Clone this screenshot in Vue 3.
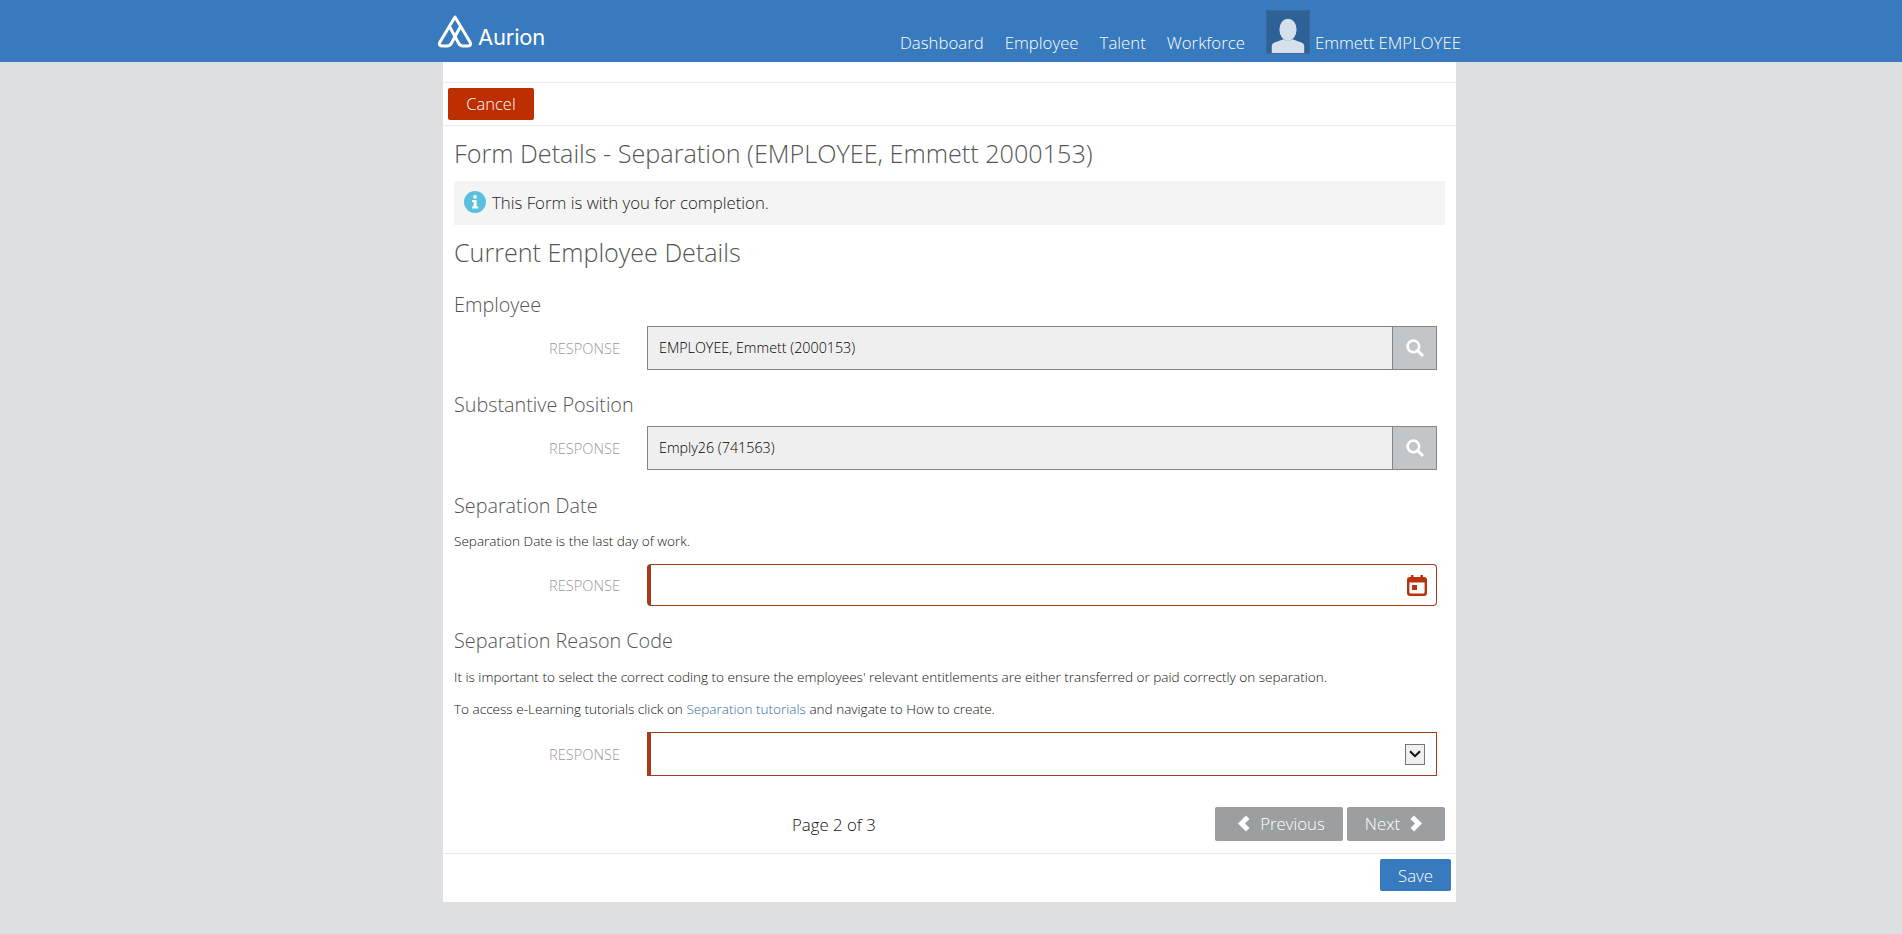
<template>
  <div class="page">
    <header class="topbar">
      <div class="topbar-inner">
        <a class="brand">
          <svg class="brand-mark" viewBox="0 0 34 33" fill="none" stroke="#fff" stroke-width="3" stroke-linejoin="round" stroke-linecap="round">
            <path d="M17 2 L2 27 Q0 31 5 31 L9 31 Q12 31 13.5 28 L17 21.5 L20.5 28 Q22 31 25 31 L29 31 Q34 31 32 27 Z" />
            <path d="M11.5 11.5 L17 21.5 L22.5 11.5" />
          </svg>
          <span class="brand-name">Aurion</span>
        </a>
        <nav class="nav">
          <a v-for="item in navItems" :key="item" class="nav-link">{{ item }}</a>
          <span class="avatar">
            <svg viewBox="0 0 44 44" width="44" height="44">
              <ellipse cx="22" cy="19.5" rx="9" ry="11.5" fill="#d6e0ec" />
              <path d="M5 44 V36.5 Q5 33.5 11 32 L17 29.5 Q22 32 27 29.5 L33 32 Q39 33.5 39 36.5 V44 Z" fill="#d6e0ec" />
            </svg>
          </span>
          <a class="nav-link user-name">Emmett EMPLOYEE</a>
        </nav>
      </div>
    </header>

    <main class="sheet">
      <div class="toolbar">
        <button class="btn btn-cancel">Cancel</button>
      </div>

      <div class="content">
        <h1 class="form-title">Form Details - Separation (EMPLOYEE, Emmett 2000153)</h1>

        <div class="notice">
          <svg class="notice-icon" viewBox="0 0 22 22" width="22" height="22">
            <circle cx="11" cy="11" r="11" fill="#5bc0de" />
            <circle cx="11" cy="5.8" r="1.9" fill="#fff" />
            <path d="M8 9 H12.6 V15.4 H14.2 V17.4 H8 V15.4 H9.6 V11 H8 Z" fill="#fff" />
          </svg>
          <span class="notice-text">This Form is with you for completion.</span>
        </div>

        <h2 class="section-title">Current Employee Details</h2>

        <section class="question q-employee">
          <h3 class="question-title">Employee</h3>
          <div class="response">
            <label class="response-label">RESPONSE</label>
            <div class="lookup">
              <span class="lookup-value">EMPLOYEE, Emmett (2000153)</span>
              <span class="lookup-btn">
                <svg viewBox="0 0 20 20" width="20" height="20" fill="none" stroke="#fff">
                  <circle cx="8.4" cy="8.4" r="5.8" stroke-width="2.6" />
                  <path d="M12.8 12.8 L18 18" stroke-width="3" />
                </svg>
              </span>
            </div>
          </div>
        </section>

        <section class="question q-position">
          <h3 class="question-title">Substantive Position</h3>
          <div class="response">
            <label class="response-label">RESPONSE</label>
            <div class="lookup">
              <span class="lookup-value">Emply26 (741563)</span>
              <span class="lookup-btn">
                <svg viewBox="0 0 20 20" width="20" height="20" fill="none" stroke="#fff">
                  <circle cx="8.4" cy="8.4" r="5.8" stroke-width="2.6" />
                  <path d="M12.8 12.8 L18 18" stroke-width="3" />
                </svg>
              </span>
            </div>
          </div>
        </section>

        <section class="question q-date">
          <h3 class="question-title">Separation Date</h3>
          <p class="hint hint-date">Separation Date is the last day of work.</p>
          <div class="response">
            <label class="response-label">RESPONSE</label>
            <div class="required-input date-input">
              <svg viewBox="0 0 20 21" width="20" height="21">
                <path d="M4 0 H6.5 V2 H13.5 V0 H16 V2 H17 Q20 2 20 5 V18 Q20 21 17 21 H3 Q0 21 0 18 V5 Q0 2 3 2 H4 Z M2.4 7.5 V17 Q2.4 18.6 4 18.6 H16 Q17.6 18.6 17.6 17 V7.5 Z" fill="#b9340e" fill-rule="evenodd" />
                <rect x="5" y="10" width="5" height="5" fill="#b9340e" />
              </svg>
            </div>
          </div>
        </section>

        <section class="question q-reason">
          <h3 class="question-title">Separation Reason Code</h3>
          <p class="hint hint-first">It is important to select the correct coding to ensure the employees' relevant entitlements are either transferred or paid correctly on separation.</p>
          <p class="hint hint-second">To access e-Learning tutorials click on <a class="link">Separation tutorials</a> and navigate to How to create.</p>
          <div class="response">
            <label class="response-label">RESPONSE</label>
            <div class="required-input select-input">
              <span class="select-arrow">
                <svg viewBox="0 0 12 8" width="12" height="8" fill="none" stroke="#111" stroke-width="2">
                  <path d="M1 1.2 L6 6.2 L11 1.2" />
                </svg>
              </span>
            </div>
          </div>
        </section>

        <div class="pager">
          <span class="page-count">Page 2 of 3</span>
          <div class="pager-buttons">
            <button class="btn btn-page btn-prev">
              <svg viewBox="0 0 13 17" width="13" height="17"><path d="M9 0.5 L12.5 4 L8 8.5 L12.5 13 L9 16.5 L1 8.5 Z" fill="#fff" /></svg>
              Previous
            </button>
            <button class="btn btn-page btn-next">
              Next
              <svg viewBox="0 0 13 17" width="13" height="17"><path d="M4 0.5 L0.5 4 L5 8.5 L0.5 13 L4 16.5 L12 8.5 Z" fill="#fff" /></svg>
            </button>
          </div>
        </div>
      </div>

      <div class="footer-bar">
        <button class="btn btn-save">Save</button>
      </div>
    </main>
  </div>
</template>

<script setup>
const navItems = ['Dashboard', 'Employee', 'Talent', 'Workforce']
</script>

<style>
html,
body {
  background: #dddfe1;
}
</style>

<style scoped>
.page {
  min-height: 934px;
  font-family: "Open Sans", "Liberation Sans", sans-serif;
  font-weight: 300;
  color: #222;
}

.topbar {
  height: 62px;
  background: #377abd;
}

.topbar-inner {
  display: flex;
  justify-content: space-between;
  width: 1023px;
  height: 62px;
  margin-left: 438px;
}

.brand {
  display: flex;
  align-items: flex-end;
  height: 48px;
  color: #fff;
}

.brand-mark {
  width: 34px;
  height: 33px;
}

.brand-name {
  margin-left: 6px;
  margin-bottom: -1px;
  font-family: Inter, "Open Sans", sans-serif;
  font-size: 22px;
  line-height: 24px;
  font-weight: 400;
  letter-spacing: -0.2px;
}

.nav {
  display: flex;
  align-items: flex-end;
  color: #fff;
  font-size: 16.8px;
}

.nav-link {
  height: 23px;
  line-height: 23px;
  margin: 0 21px 8px 0;
}

.avatar {
  width: 44px;
  height: 44px;
  margin-right: 5px;
  margin-bottom: 8px;
}

.avatar svg {
  display: block;
  background: #2e6196;
  border: 1px solid #3a6a9c;
  box-sizing: border-box;
}

.user-name {
  margin-right: 0;
}

.sheet {
  width: 1013px;
  height: 840px;
  margin-left: 443px;
  background: #fff;
  display: flex;
  flex-direction: column;
}

.toolbar {
  margin-top: 20px;
  height: 44px;
  padding: 5px 0 0 5px;
  box-sizing: border-box;
  border-top: 1px solid #eceeee;
  border-bottom: 1px solid #eceeee;
}

.btn {
  border: 0;
  font-family: inherit;
  font-weight: 300;
  color: #fff;
  cursor: pointer;
}

.btn-cancel {
  display: block;
  width: 86px;
  height: 32px;
  background: #bd2e00;
  border-radius: 2px;
  font-size: 16.5px;
  padding: 0 0 2px;
}

.content {
  flex: 1;
  padding: 0 11px;
}

.form-title {
  margin: 10px 0 0;
  font-size: 25.2px;
  line-height: 34px;
  font-weight: 300;
  color: #555;
}

.notice {
  display: flex;
  align-items: center;
  height: 44px;
  margin-top: 11px;
  padding-left: 10px;
  background: #f4f4f4;
  font-size: 16.8px;
  color: #222;
}

.notice-icon {
  margin-right: 6px;
  margin-top: -3px;
}

.notice-text {
  margin-top: -2px;
}

.section-title {
  margin: 11px 0 0;
  font-size: 25.1px;
  line-height: 33px;
  font-weight: 300;
  color: #555;
}

.question-title {
  margin: 0;
  font-size: 19.8px;
  line-height: 26px;
  font-weight: 300;
  color: #555;
}

.q-employee {
  margin-top: 23px;
}

.q-position {
  margin-top: 22px;
}

.q-date {
  margin-top: 23px;
}

.q-reason {
  margin-top: 22px;
}

.hint {
  margin: 0;
  font-size: 13.55px;
  line-height: 18px;
  color: #111;
}

.hint-date {
  margin-top: 13px;
  margin-bottom: 14px;
}

.hint-first {
  margin-top: 14px;
}

.hint-second {
  margin-top: 14px;
  margin-bottom: 14px;
}

.link {
  color: #2e6da4;
}

.response {
  display: flex;
  align-items: center;
  margin-top: 8px;
}

.hint + .response {
  margin-top: 0;
}

.response-label {
  width: 166px;
  margin-right: 27px;
  text-align: right;
  font-size: 14.6px;
  color: #999;
}

.lookup {
  display: flex;
  width: 790px;
  height: 44px;
  box-sizing: border-box;
  border: 1px solid #80868b;
  background: #efefef;
}

.lookup-value {
  flex: 1;
  padding-left: 11px;
  font-size: 14.3px;
  font-weight: 300;
  line-height: 42px;
  color: #000;
}

.lookup-btn {
  display: flex;
  align-items: center;
  justify-content: center;
  width: 43px;
  background: #c2c6c9;
  border-left: 1px solid #80868b;
}

.required-input {
  display: flex;
  align-items: center;
  justify-content: flex-end;
  width: 790px;
  box-sizing: border-box;
  border: 1px solid #a63a19;
  border-left: 4px solid #a63a19;
  background: #fff;
}

.date-input {
  height: 42px;
  padding-right: 9px;
  border-radius: 4px;
}

.select-input {
  height: 44px;
  padding-right: 11px;
}

.select-arrow {
  display: flex;
  align-items: center;
  justify-content: center;
  width: 20px;
  height: 21px;
  box-sizing: border-box;
  border: 1px solid #777;
  background: #f0f0f0;
}

.pager {
  display: flex;
  align-items: center;
  justify-content: space-between;
  height: 34px;
  margin-top: 31px;
}

.page-count {
  margin-left: 338px;
  font-size: 16.8px;
  color: #111;
}

.pager-buttons {
  display: flex;
  gap: 4px;
}

.btn-page {
  display: flex;
  align-items: center;
  justify-content: center;
  height: 34px;
  background: #9b9fa2;
  border-radius: 2px;
  font-size: 16.8px;
  padding: 0 0 2px;
}

.btn-prev {
  width: 128px;
  gap: 10px;
  padding-left: 4px;
}

.btn-next {
  width: 98px;
  gap: 10px;
  padding-right: 4px;
}

.footer-bar {
  display: flex;
  justify-content: flex-end;
  height: 49px;
  padding: 5px 5px 0 0;
  box-sizing: border-box;
  border-top: 1px solid #e6ecef;
}

.btn-save {
  width: 71px;
  height: 32px;
  background: #377abd;
  border-radius: 2px;
  font-size: 16.8px;
  padding: 0;
}
</style>
